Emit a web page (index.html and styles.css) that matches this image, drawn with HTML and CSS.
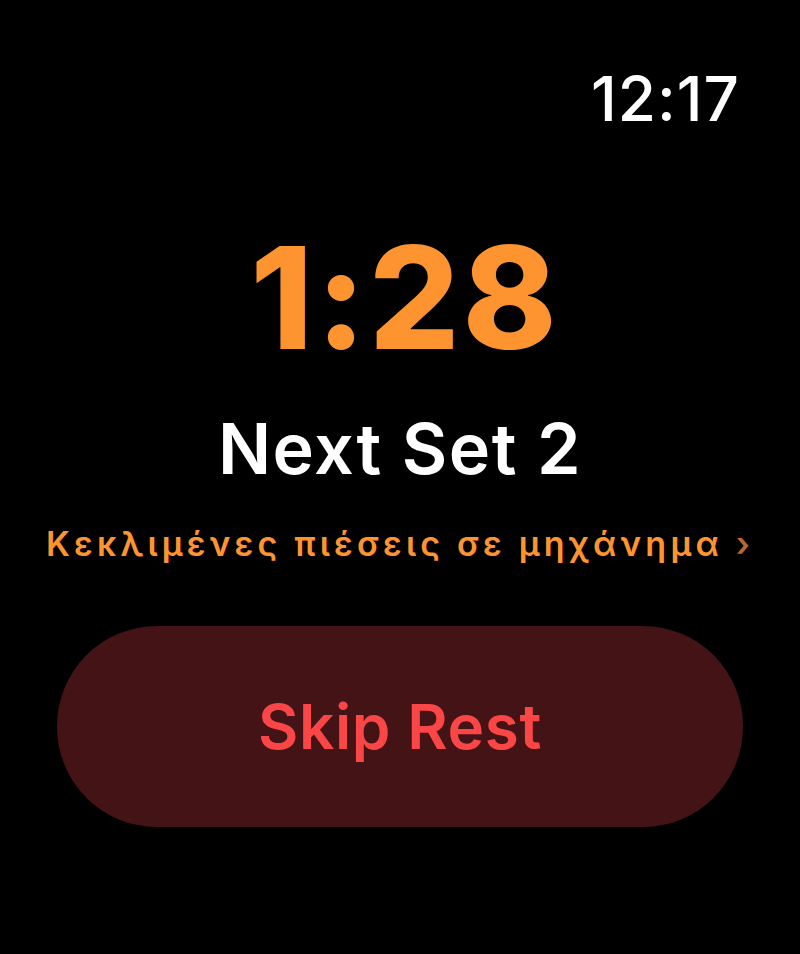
FILE: index.html
```html
<!DOCTYPE html>
<html>
<head>
<meta charset="utf-8">
<link rel="stylesheet" href="styles.css">
</head>
<body>
<div class="screen">
  <div class="status"><span class="clock">12:17</span></div>
  <div class="timer">1:28</div>
  <div class="next">Next Set 2</div>
  <div class="exercise">Κεκλιμένες πιέσεις σε μηχάνημα <span class="chev">›</span></div>
  <div class="actions"><button class="skip">Skip Rest</button></div>
</div>
</body>
</html>
```
FILE: styles.css
```css
html, body {
  margin: 0;
  padding: 0;
  background: #000;
}
.screen {
  width: 800px;
  height: 954px;
  background: #000;
  display: flex;
  flex-direction: column;
  align-items: center;
  font-family: Inter, "Noto Sans", sans-serif;
  overflow: hidden;
}
.status {
  align-self: stretch;
  display: flex;
  justify-content: flex-end;
  padding: 68px 60px 0 0;
}
.clock {
  color: #fff;
  font-size: 62px;
  font-weight: 500;
  line-height: 62px;
  letter-spacing: 1px;
}
.timer {
  margin-top: 92px;
  margin-left: 10px;
  color: #fe9430;
  font-size: 142px;
  font-weight: 800;
  line-height: 150px;
  letter-spacing: 3px;
}
.next {
  margin-top: 42px;
  color: #fff;
  font-size: 70px;
  font-weight: 600;
  line-height: 70px;
  letter-spacing: 1.5px;
}
.exercise {
  margin-top: 40px;
  color: #fe9430;
  font-size: 34px;
  font-weight: 600;
  line-height: 40px;
  letter-spacing: 4.2px;
  white-space: nowrap;
}
.chev {
  color: #b8692a;
}
.actions {
  align-self: stretch;
  display: flex;
  justify-content: center;
  margin-top: 62px;
}
.skip {
  width: 686px;
  height: 201px;
  border: none;
  border-radius: 100px;
  background: #431315;
  color: #fb4648;
  font-family: Inter, "Noto Sans", sans-serif;
  font-size: 62px;
  font-weight: 600;
  letter-spacing: 0.6px;
  padding: 0;
}
```
